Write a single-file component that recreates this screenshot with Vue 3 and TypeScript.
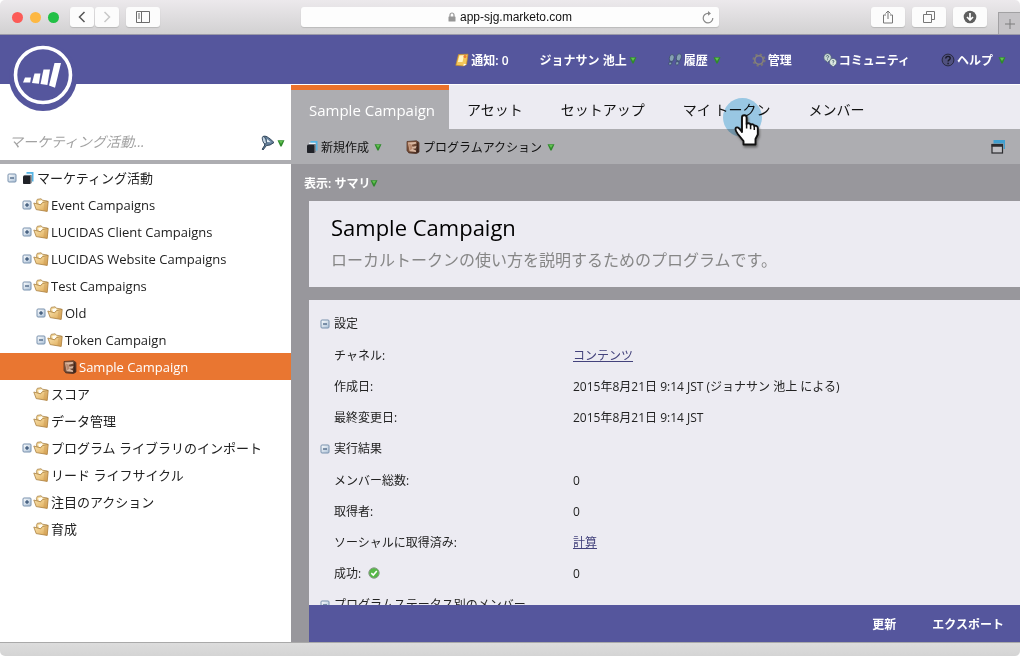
<script setup lang="ts">
import { ref } from 'vue'

interface MenuItem {
  label: string
  icon?: string
  caret?: boolean
  loose?: boolean
}

interface TreeNode {
  label: string
  depth: number
  icon: string
  state?: 'open' | 'closed'
  selected?: boolean
}

interface DetailRow {
  label: string
  value: string
  link?: boolean
  ok?: boolean
}

interface DetailSection {
  title: string
  rows: DetailRow[]
}

const menu: MenuItem[] = [
  { label: '通知: 0', icon: 'note' },
  { label: 'ジョナサン 池上', caret: true },
  { label: '履歴', icon: 'steps', caret: true, loose: true },
  { label: '管理', icon: 'gear' },
  { label: 'コミュニティ', icon: 'community' },
  { label: 'ヘルプ', icon: 'help', caret: true, loose: true },
]

const nodes: TreeNode[] = [
  { label: 'マーケティング活動', depth: 0, icon: 'stack', state: 'open' },
  { label: 'Event Campaigns', depth: 1, icon: 'folder', state: 'closed' },
  { label: 'LUCIDAS Client Campaigns', depth: 1, icon: 'folder', state: 'closed' },
  { label: 'LUCIDAS Website Campaigns', depth: 1, icon: 'folder', state: 'closed' },
  { label: 'Test Campaigns', depth: 1, icon: 'folder', state: 'open' },
  { label: 'Old', depth: 2, icon: 'folder', state: 'closed' },
  { label: 'Token Campaign', depth: 2, icon: 'folder', state: 'open' },
  { label: 'Sample Campaign', depth: 3, icon: 'program', selected: true },
  { label: 'スコア', depth: 1, icon: 'folder' },
  { label: 'データ管理', depth: 1, icon: 'folder' },
  { label: 'プログラム ライブラリのインポート', depth: 1, icon: 'folder', state: 'closed' },
  { label: 'リード ライフサイクル', depth: 1, icon: 'folder' },
  { label: '注目のアクション', depth: 1, icon: 'folder', state: 'closed' },
  { label: '育成', depth: 1, icon: 'folder' },
]

const sections: DetailSection[] = [
  {
    title: '設定',
    rows: [
      { label: 'チャネル:', value: 'コンテンツ', link: true },
      { label: '作成日:', value: '2015年8月21日 9:14 JST (ジョナサン 池上 による)' },
      { label: '最終変更日:', value: '2015年8月21日 9:14 JST' },
    ],
  },
  {
    title: '実行結果',
    rows: [
      { label: 'メンバー総数:', value: '0' },
      { label: '取得者:', value: '0' },
      { label: 'ソーシャルに取得済み:', value: '計算', link: true },
      { label: '成功:', value: '0', ok: true },
    ],
  },
  { title: 'プログラムステータス別のメンバー', rows: [] },
]

const tabs: string[] = ['Sample Campaign', 'アセット', 'セットアップ', 'マイ トークン', 'メンバー']
const activeTab = ref(0)
const address = ref('app-sjg.marketo.com')
const query = ref('')
</script>

<template>
  <div class="window">
    <svg class="symbols" width="0" height="0" aria-hidden="true">
      <defs>
        <linearGradient id="g-folder" x1="0" y1="0" x2="1" y2="1">
          <stop offset="0" stop-color="#fbe7b4" />
          <stop offset="1" stop-color="#dca651" />
        </linearGradient>
        <linearGradient id="g-box" x1="0" y1="0" x2="1" y2="1">
          <stop offset="0" stop-color="#ffffff" />
          <stop offset="1" stop-color="#a9bfd6" />
        </linearGradient>
        <linearGradient id="g-book" x1="0" y1="0" x2="1" y2="1">
          <stop offset="0" stop-color="#a8714f" />
          <stop offset="1" stop-color="#3a241c" />
        </linearGradient>
      </defs>
      <symbol id="i-caret" viewBox="0 0 8 8">
        <path d="M.5 1.200h7L4.600 7.500H3.400z" fill="#2f8a2c" />
        <path d="M2 1.800h4L4 5z" fill="#62c350" />
      </symbol>
      <symbol id="i-closed" viewBox="0 0 10 10">
        <rect x="1" y="1" width="8" height="8" rx="1" fill="url(#g-box)" stroke="#7891ad" />
        <path d="M3 5h4M5 3v4" stroke="#1f3c63" />
      </symbol>
      <symbol id="i-open" viewBox="0 0 10 10">
        <rect x="1" y="1" width="8" height="8" rx="1" fill="url(#g-box)" stroke="#7891ad" />
        <path d="M3 5h4" stroke="#1f3c63" />
      </symbol>
      <symbol id="i-folder" viewBox="0 0 16 16">
        <path d="M3.400 4.600 4.300 2.300 8.200 1.800 9.200 3.200 14.600 4 13.600 12 5 11z" fill="#f3d592" stroke="#a98550" stroke-width=".8" />
        <path d="M5.200 4 9 3.200 10.400 6 6 7.500z" fill="#fffdf6" />
        <path d="M.8 6 7.600 7.800 9.400 5.600 15.200 4.400 14.200 14.400 3.200 12.600z" fill="url(#g-folder)" stroke="#a87d3d" stroke-width=".8" stroke-linejoin="round" />
        <path d="M11.200 6.400 15.200 4.400 14.200 14.400 10.400 13.600z" fill="#c79650" opacity=".4" />
      </symbol>
      <symbol id="i-stack" viewBox="0 0 12 14">
        <path d="M4.500 1h7v9.500h-1.800V3H4.500z" fill="#55b4e4" />
        <path d="M3 2.800h6.500v8.700H8.500V4.200H3z" fill="#e9f4fb" />
        <path d="M1 5 2.500 4h7L8.500 5z" fill="#6a6d75" />
        <rect x="1" y="5" width="7.500" height="8" rx=".8" fill="#202228" />
        <path d="M8.500 5 9.500 4v8l-1 1z" fill="#44474f" />
      </symbol>
      <symbol id="i-program" viewBox="0 0 14 14">
        <path d="M1 1.500 10.500.8 13 2.500V12L10.500 13.600 2.800 12.900 1 10.500z" fill="url(#g-book)" stroke="#4a2c20" stroke-width=".7" />
        <path d="M2 2.600 9.800 2 10.600 3.400 5.600 4.800 6.600 6.800 10.600 6 9.600 8.600 6.400 8.800 10 10.400V12L3.600 11.200z" fill="#d9b7a1" />
        <path d="M3 3.400 5.600 4.800 6.400 8.800 3.800 10.500z" fill="#b98a70" />
        <path d="M11.300 2.400v10" stroke="#39221a" />
      </symbol>
      <symbol id="i-note" viewBox="0 0 14 14">
        <path d="M3.500 1.500 13 1.200 11.500 11.500 8.500 13 .8 12.300z" fill="#f4c659" stroke="#c58c2c" stroke-width=".7" />
        <path d="M4.500 2.500 9 2.300 7.500 9 2.800 9z" fill="#fff3c4" />
        <path d="M11.500 11.500 8.500 13l.3-2.300z" fill="#fff" />
        <circle cx="10" cy="3.600" r="1.500" fill="#ef7d31" />
      </symbol>
      <symbol id="i-steps" viewBox="0 0 14 14">
        <g fill="#86a0b3" stroke="#34495f" stroke-width=".7">
          <path d="M3.800 1.600C6.200 1.300 6.800 4 5.600 6.500L4.300 8.600 1.600 7.800C.8 5 1.800 2 3.800 1.600z" />
          <path d="M1.500 8.900 3.900 9.600C3.800 12.600.6 12.700.8 10.500z" />
          <path d="M11 .8c2.500-.2 3 2.700 1.700 5.200L11.400 8.200 8.600 7.300C7.800 4.500 8.900 1.200 11 .8z" />
          <path d="M8.400 8.400 11 9.200C10.900 12.600 7.500 12.800 7.700 10.400z" />
        </g>
      </symbol>
      <symbol id="i-gear" viewBox="0 0 14 14">
        <circle cx="7" cy="7" r="5.600" fill="none" stroke="#7a7772" stroke-width="2" stroke-dasharray="2.200 2.198" />
        <circle cx="7" cy="7" r="4.200" fill="none" stroke="#86827b" stroke-width="1.600" />
      </symbol>
      <symbol id="i-community" viewBox="0 0 14 14">
        <path d="M4.500.4a4 4 0 0 1 1.300 7.700L4.300 9.900 3.600 8.200A4 4 0 0 1 4.500.4z" fill="#c8d7d5" stroke="#3f5668" stroke-width=".6" />
        <path d="M10 5.400a3.800 3.800 0 0 1 1.600 7.200L10.200 14 9.400 12.900A3.800 3.800 0 0 1 10 5.400z" fill="#dde9e2" stroke="#3f5668" stroke-width=".6" />
        <path d="M3.300 3.500c.2-1.300 2.400-1.200 2.300.1C5.500 4.500 4.500 4.500 4.500 5.500M4.500 6.400v.7M9.200 8.200c.2-1 1.800-.8 1.700.1-.1.700-.8.700-.8 1.500M10.100 10.700v.8" fill="none" stroke="#29465a" stroke-width=".8" />
      </symbol>
      <symbol id="i-help" viewBox="0 0 14 14">
        <circle cx="7" cy="7" r="5.900" fill="#50517f" stroke="#242438" stroke-width=".9" />
        <path d="M4.700 5.600C4.800 2.500 9.500 2.800 9.200 5.400 9 7 7.100 6.700 7.100 8.500M7.100 9.700v1.500" fill="none" stroke="#1a1a2a" stroke-width="1.400" />
      </symbol>
      <symbol id="i-filter" viewBox="0 0 14 16">
        <path d="M2 1.500C4.500.5 7 1.500 13 7.500L9 10 5.500 10.500 2 15l-.8-.8L3.800 10z" fill="#66819c" stroke="#22384d" stroke-width=".9" />
        <ellipse cx="3.300" cy="5.300" rx="1.700" ry="4" transform="rotate(-18 3.300 5.300)" fill="#c5d5e3" stroke="#2c4359" stroke-width=".8" />
        <path d="M6 4 10 7.200 6 7z" fill="#e5eef5" />
      </symbol>
      <symbol id="i-ok" viewBox="0 0 12 12">
        <circle cx="6" cy="6" r="5.200" fill="#56b847" stroke="#8b9a8b" stroke-width="1" />
        <path d="M3.300 6.200 5.300 8 8.800 4" fill="none" stroke="#fff" stroke-width="1.600" />
      </symbol>
    </svg>

    <header class="chrome">
      <div class="chrome-left">
        <span class="light red"></span>
        <span class="light amber"></span>
        <span class="light green"></span>
        <div class="nav-pair">
          <button class="tool narrow" type="button" aria-label="戻る">
            <svg width="10" height="14" viewBox="0 0 10 14"><path d="M7.500 2 2.500 7l5 5" fill="none" stroke="#555" stroke-width="1.500" /></svg>
          </button>
          <button class="tool narrow" type="button" aria-label="進む">
            <svg width="10" height="14" viewBox="0 0 10 14"><path d="M2.500 2l5 5-5 5" fill="none" stroke="#c8c8c8" stroke-width="1.500" /></svg>
          </button>
        </div>
        <button class="tool" type="button" aria-label="サイドバー">
          <svg width="14" height="12" viewBox="0 0 14 12"><path d="M.5.500h13v11H.500zM5.500.500v11M2 3h2M2 5h2M2 7h2" fill="none" stroke="#6c6c6c" /></svg>
        </button>
      </div>
      <div class="address">
        <svg width="8" height="10" viewBox="0 0 8 10"><path d="M2 5V3a2 2 0 0 1 4 0v2" fill="none" stroke="#969696" stroke-width="1.200" /><rect x=".5" y="4.500" width="7" height="5" rx=".6" fill="#969696" /></svg>
        <input v-model="address" type="text" aria-label="アドレス" />
        <button class="reload" type="button" aria-label="再読み込み">
          <svg width="12" height="13" viewBox="0 0 12 13"><path d="M10.800 7A4.800 4.800 0 1 1 6 2.300h1.500" fill="none" stroke="#8a8a8a" stroke-width="1.200" /><path d="M6 0 9 2.400 6 4.800z" fill="#8a8a8a" /></svg>
        </button>
      </div>
      <div class="chrome-right">
        <button class="tool" type="button" aria-label="共有">
          <svg width="12" height="14" viewBox="0 0 12 14"><path d="M4 5H1.500v8h9V5H8M6 9V1.200M3.500 3.500 6 1l2.500 2.500" fill="none" stroke="#777" /></svg>
        </button>
        <button class="tool" type="button" aria-label="タブ一覧">
          <svg width="12" height="12" viewBox="0 0 12 12"><path d="M.5 3.500h8v8h-8zM3.500 3.500v-3h8v8h-3" fill="none" stroke="#777" /></svg>
        </button>
        <button class="tool" type="button" aria-label="ダウンロード">
          <svg width="14" height="14" viewBox="0 0 14 14"><circle cx="7" cy="7" r="6.300" fill="#5e5e5e" /><path d="M7 3v6.500M4 7l3 3 3-3" fill="none" stroke="#fff" stroke-width="1.700" /></svg>
        </button>
        <button class="new-tab" type="button" aria-label="新規タブ">
          <svg width="10" height="10" viewBox="0 0 10 10"><path d="M5 0v10M0 5h10" stroke="#7d7d7d" /></svg>
        </button>
      </div>
    </header>

    <nav class="topbar">
      <a class="logo" href="#" aria-label="ホーム">
        <svg width="68" height="68" viewBox="0 0 68 68">
          <circle cx="34" cy="34" r="34" fill="#55569d" />
          <circle cx="34" cy="32" r="27.500" fill="none" stroke="#fff" stroke-width="3.600" />
          <g fill="#fff">
            <path d="M16 34.500h6l-.8 5H14z" />
            <path d="M25.500 30.500h6l-1.600 10.200-6.900-.6z" />
            <path d="M34.500 26.500h6.500l-2.600 15.500-6.900-.9z" />
            <path d="M45.500 20H52L46 44.800l-6-2.200z" />
          </g>
        </svg>
      </a>
      <button v-for="item in menu" :key="item.label" type="button" class="menu-item">
        <svg v-if="item.icon" class="menu-icon" width="14" height="14"><use :href="'#i-' + item.icon" /></svg>
        <span>{{ item.label }}</span>
        <svg v-if="item.caret" class="caret" :class="{ loose: item.loose }" width="8" height="8"><use href="#i-caret" /></svg>
      </button>
    </nav>

    <div class="body">
      <aside class="sidebar">
        <div class="search">
          <input v-model="query" type="text" placeholder="マーケティング活動..." aria-label="マーケティング活動を検索" />
          <button type="button" aria-label="フィルター">
            <svg width="14" height="16"><use href="#i-filter" /></svg>
            <svg width="8" height="8"><use href="#i-caret" /></svg>
          </button>
        </div>
        <ul class="tree">
          <li v-for="node in nodes" :key="node.label">
            <button type="button" class="node" :class="['depth-' + node.depth, { selected: node.selected }]">
              <svg v-if="node.state" width="10" height="10"><use :href="'#i-' + node.state" /></svg>
              <span v-else class="no-toggle"></span>
              <svg class="node-icon" :width="node.icon === 'folder' ? 16 : 14" :height="node.icon === 'folder' ? 16 : 14"><use :href="'#i-' + node.icon" /></svg>
              <span>{{ node.label }}</span>
            </button>
          </li>
        </ul>
      </aside>

      <main class="main">
        <div class="tabs" role="tablist">
          <button
            v-for="(tab, index) in tabs"
            :key="tab"
            type="button"
            role="tab"
            class="tab"
            :class="{ active: index === activeTab }"
            :aria-selected="index === activeTab"
            @click="activeTab = index"
          >
            {{ tab }}
            <span v-if="index === 3" class="halo"></span>
            <svg v-if="index === 3" class="hand" width="28" height="34" viewBox="0 0 28 34">
              <path
                d="M9 19V4.500a2.300 2.300 0 0 1 4.600 0V11c1-1.300 3.600-.9 4 .8 1.200-1 3.400-.4 3.700 1.200 1.300-.8 3.500 0 3.500 2.200v6.300L22.500 26v5.500h-12V28L4.800 21C3 18.500 2 15.500 3.200 14.600 5 13.500 7.500 16.500 9 19z"
                fill="#fff"
                stroke="#111"
                stroke-width="1.900"
                stroke-linejoin="round"
              />
              <path d="M13.600 10.500v5M17.600 11.800v4.500M21.300 13v4" stroke="#111" stroke-width="1.500" />
            </svg>
          </button>
        </div>

        <div class="toolbar">
          <button type="button" class="action">
            <svg width="12" height="14"><use href="#i-stack" /></svg>
            <span>新規作成</span>
            <svg class="action-caret" width="8" height="8"><use href="#i-caret" /></svg>
          </button>
          <button type="button" class="action">
            <svg width="14" height="14"><use href="#i-program" /></svg>
            <span>プログラムアクション</span>
            <svg class="action-caret" width="8" height="8"><use href="#i-caret" /></svg>
          </button>
          <button type="button" class="popout" aria-label="新しいウィンドウ">
            <svg width="14" height="14" viewBox="0 0 14 14">
              <path d="M2.500 0H14v9h-1.400V3.400H2.500z" fill="#3f9fd0" />
              <rect x="1" y="4.500" width="10.500" height="8.500" fill="#c0c0c4" stroke="#2b2b2e" stroke-width="1.200" />
              <path d="M.5 5.500h11.500" stroke="#2b2b2e" stroke-width="2.600" />
            </svg>
          </button>
        </div>

        <div class="content">
          <button type="button" class="view">
            <span>表示: サマリ</span>
            <svg width="8" height="8"><use href="#i-caret" /></svg>
          </button>

          <section class="intro">
            <h1>Sample Campaign</h1>
            <p>ローカルトークンの使い方を説明するためのプログラムです。</p>
          </section>

          <section class="details">
            <table>
              <colgroup>
                <col class="label-col" />
                <col />
              </colgroup>
              <tbody v-for="section in sections" :key="section.title">
                <tr class="section-row">
                  <th colspan="2" scope="rowgroup">
                    <button type="button">
                      <svg width="10" height="10"><use href="#i-open" /></svg>
                      <span>{{ section.title }}</span>
                    </button>
                  </th>
                </tr>
                <tr v-for="row in section.rows" :key="row.label">
                  <th scope="row">
                    {{ row.label }}
                    <svg v-if="row.ok" class="ok" width="12" height="12"><use href="#i-ok" /></svg>
                  </th>
                  <td>
                    <a v-if="row.link" href="#">{{ row.value }}</a>
                    <template v-else>{{ row.value }}</template>
                  </td>
                </tr>
              </tbody>
            </table>
          </section>

          <footer class="actions">
            <button type="button">更新</button>
            <button type="button">エクスポート</button>
          </footer>
        </div>
      </main>
    </div>

    <div class="status"></div>
  </div>
</template>

<style>
body {
  margin: 0;
  background: #fff;
}
</style>

<style scoped>
* {
  box-sizing: border-box;
}

.window {
  display: flex;
  flex-direction: column;
  height: 100vh;
  overflow: hidden;
  border-radius: 5px;
  font-family: "Open Sans", "Noto Sans CJK JP", sans-serif;
  font-size: 12px;
  color: #222;
}

.symbols {
  position: absolute;
}

button {
  display: flex;
  align-items: center;
  padding: 0;
  border: 0;
  background: none;
  color: inherit;
  font: inherit;
  white-space: nowrap;
  cursor: pointer;
}

svg {
  flex: none;
}

input {
  min-width: 0;
  padding: 0;
  border: 0;
  outline: 0;
  background: none;
}

/* Browser chrome */
.chrome {
  display: grid;
  grid-template-columns: 1fr 41% 1fr;
  flex: none;
  height: 35px;
  background: linear-gradient(#ece9ec, #d2d1d2);
  border-bottom: 1px solid #9a99a8;
}

.chrome-left {
  display: flex;
  align-items: center;
  gap: 7px;
  padding-left: 12px;
}

.light {
  width: 11px;
  height: 11px;
  border-radius: 50%;
}

.red {
  background: #fc5b57;
}

.amber {
  background: #fdb843;
}

.green {
  background: #22c046;
}

.nav-pair {
  display: flex;
  gap: 1px;
  margin-left: 4px;
}

.tool {
  justify-content: center;
  width: 34px;
  height: 20px;
  border-radius: 3px;
  background: #fcfcfc;
  box-shadow: 0 1px 1px #b9b9b9;
}

.tool.narrow {
  width: 24px;
}

.address {
  position: relative;
  display: flex;
  align-items: center;
  align-self: center;
  justify-content: center;
  gap: 4px;
  height: 20px;
  padding-left: 4px;
  border-radius: 3px;
  background: #fdfdfd;
  box-shadow: 0 1px 1px #bbb;
}

.address input {
  width: 116px;
  font-family: "Liberation Sans", sans-serif;
  font-size: 12px;
  color: #111;
}

.reload {
  position: absolute;
  right: 5px;
}

.chrome-right {
  display: flex;
  align-items: center;
  justify-content: flex-end;
  gap: 7px;
}

.new-tab {
  align-self: flex-end;
  justify-content: center;
  width: 22px;
  height: 22px;
  margin-left: 4px;
  border: solid #a2a1a3;
  border-width: 1px 0 0 1px;
  background: #c6c4c7;
}

/* Product bar */
.topbar {
  position: relative;
  z-index: 2;
  display: flex;
  flex: none;
  align-items: center;
  justify-content: flex-end;
  gap: 31px;
  height: 49px;
  padding-right: 14px;
  background: #55569d;
  color: #fff;
}

.logo {
  position: absolute;
  top: 8px;
  left: 9px;
  height: 68px;
}

.menu-item {
  font-weight: 600;
}

.menu-icon {
  margin-right: 2px;
}

.caret {
  margin-left: 2px;
}

.caret.loose {
  margin-left: 5px;
}

/* Columns */
.body {
  display: grid;
  flex: 1;
  grid-template-columns: 291px minmax(0, 1fr);
  min-height: 0;
  padding-top: 1px;
}

.sidebar {
  display: flex;
  flex-direction: column;
  min-height: 0;
  background: #fff;
}

.search {
  display: flex;
  flex: none;
  align-items: flex-end;
  justify-content: space-between;
  height: 79px;
  padding: 0 6px 9px 9px;
  border-bottom: 4px solid #adadb1;
}

.search input {
  flex: 1;
  font-family: "Open Sans", "Noto Sans CJK JP", sans-serif;
  font-size: 14px;
  font-style: italic;
  line-height: 18px;
}

.search input::placeholder {
  color: #a2a2a2;
}

.search button {
  gap: 2px;
}

.tree {
  flex: 1;
  min-height: 0;
  margin: 0;
  padding: 0;
  overflow: hidden;
  list-style: none;
}

.node {
  width: 100%;
  height: 27px;
  gap: 2px;
  font-size: 13px;
}

.node-icon {
  margin-left: -1px;
}

.depth-0 {
  padding-left: 7px;
}

.depth-0 .node-icon {
  margin-left: 2px;
}

.depth-1 {
  padding-left: 22px;
}

.depth-2 {
  padding-left: 36px;
}

.depth-3 {
  padding-left: 52px;
}

.no-toggle {
  width: 10px;
}

.node.selected {
  background: #e97631;
  color: #fff;
}

.main {
  display: flex;
  flex-direction: column;
  min-width: 0;
  min-height: 0;
}

.tabs {
  display: flex;
  flex: none;
  gap: 2px;
  height: 44px;
  background: #ecebf2;
}

.tab {
  position: relative;
  padding: 3px 18px 0;
  font-size: 14px;
  color: #111;
}

.tab.active {
  margin-right: -2px;
  padding: 0 14px 0 18px;
  border-top: 5px solid #ec722b;
  background: #adadb1;
  font-size: 15px;
  color: #fff;
}

.halo {
  position: absolute;
  top: 13px;
  left: 58px;
  width: 39px;
  height: 39px;
  border-radius: 50%;
  background: #a5d8f0;
  mix-blend-mode: multiply;
}

.hand {
  position: absolute;
  top: 28px;
  left: 68px;
  filter: drop-shadow(1px 2px 1px #666);
}

.toolbar {
  display: flex;
  flex: none;
  align-items: center;
  gap: 24px;
  height: 35px;
  padding: 0 15px;
  background: #adadb1;
  color: #111;
}

.action {
  gap: 3px;
}

.action-caret {
  margin-left: 2px;
}

.popout {
  margin-left: auto;
}

.content {
  display: flex;
  flex: 1;
  flex-direction: column;
  min-height: 0;
  padding-left: 18px;
  background: #98979c;
}

.view {
  flex: none;
  align-self: flex-start;
  height: 37px;
  margin-left: -5px;
  color: #fff;
  font-weight: 600;
}

.intro {
  flex: none;
  height: 86px;
  margin-bottom: 13px;
  padding: 11px 22px 0;
  background: #ecebf2;
}

h1 {
  margin: 0;
  color: #000;
  font-size: 22px;
  font-weight: 400;
  line-height: 30px;
}

.intro p {
  margin: 5px 0 0;
  color: #868686;
  font-size: 16px;
  line-height: 26px;
}

.details {
  flex: 1;
  min-height: 0;
  padding: 8px 11px 0;
  overflow: hidden;
  background: #ecebf2;
}

table {
  width: 100%;
  border-collapse: collapse;
  table-layout: fixed;
}

.label-col {
  width: 253px;
}

tr {
  height: 31px;
}

.section-row {
  height: 32px;
}

th,
td {
  padding: 0;
  line-height: 18px;
  text-align: left;
  font-weight: 400;
}

th[scope="row"] {
  padding-left: 14px;
}

.section-row button {
  gap: 4px;
}

.ok {
  margin-left: 4px;
  vertical-align: -1px;
}

td a {
  color: #43427c;
}

.actions {
  display: flex;
  flex: none;
  align-items: center;
  justify-content: flex-end;
  gap: 36px;
  height: 37px;
  padding-right: 16px;
  background: #55569d;
  color: #fff;
  font-weight: 600;
}

.status {
  flex: none;
  height: 14px;
  border-top: 1px solid #a9a9a9;
  background: linear-gradient(#dcdcdc, #d4d4d4);
}
</style>
